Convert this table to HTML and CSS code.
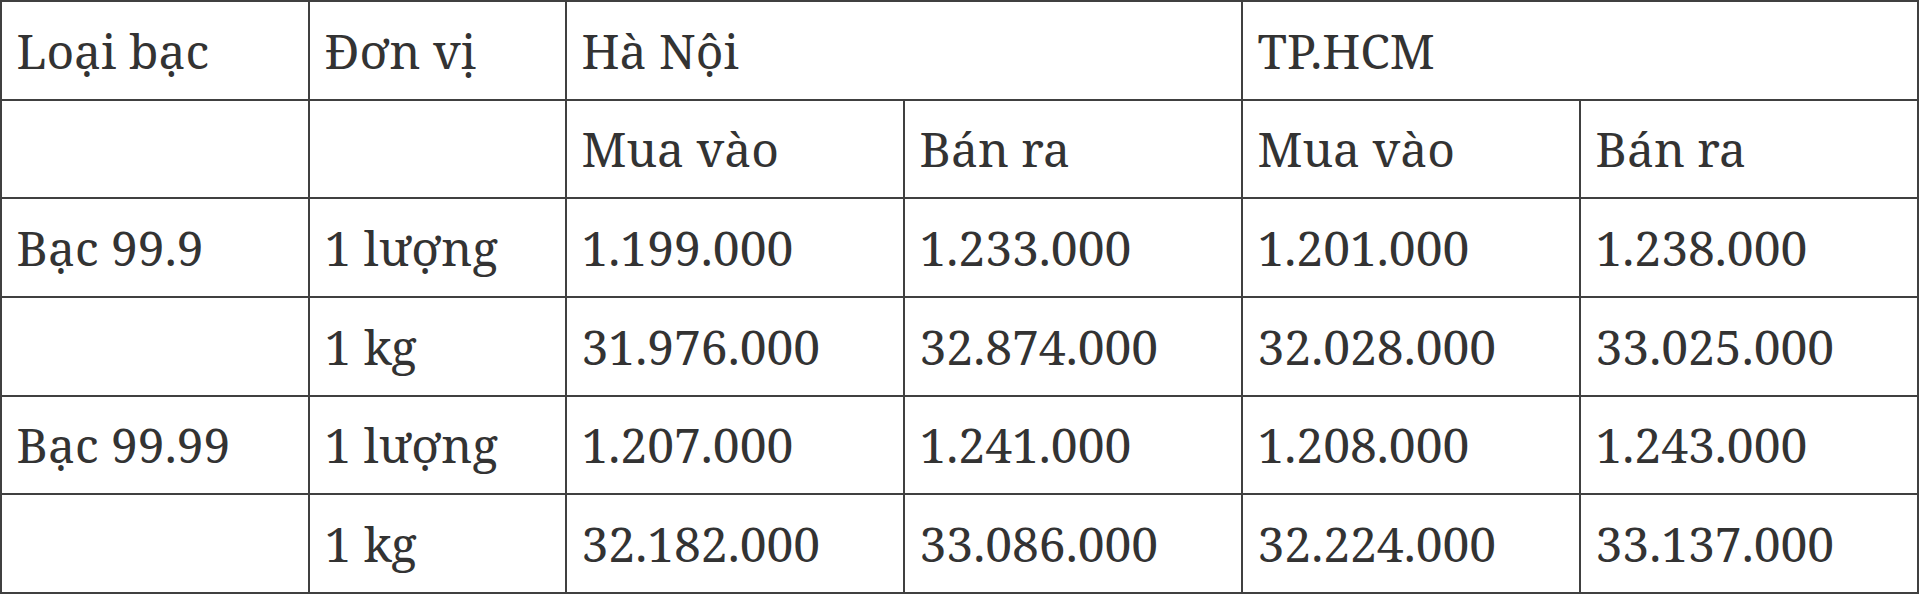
FILE: index.html
```html
<!DOCTYPE html>
<html lang="vi">
<head>
<meta charset="utf-8">
<title>Giá bạc</title>
<link rel="stylesheet" href="styles.css">
</head>
<body>
<table class="price-table">
  <colgroup>
    <col class="c-type">
    <col class="c-unit">
    <col class="c-price">
    <col class="c-price">
    <col class="c-price">
    <col class="c-price">
  </colgroup>
  <tbody>
    <tr>
      <td>Loại bạc</td>
      <td>Đơn vị</td>
      <td colspan="2">Hà Nội</td>
      <td colspan="2">TP.HCM</td>
    </tr>
    <tr>
      <td></td>
      <td></td>
      <td>Mua vào</td>
      <td>Bán ra</td>
      <td>Mua vào</td>
      <td>Bán ra</td>
    </tr>
    <tr>
      <td>Bạc 99.9</td>
      <td>1 lượng</td>
      <td>1.199.000</td>
      <td>1.233.000</td>
      <td>1.201.000</td>
      <td>1.238.000</td>
    </tr>
    <tr>
      <td></td>
      <td>1 kg</td>
      <td>31.976.000</td>
      <td>32.874.000</td>
      <td>32.028.000</td>
      <td>33.025.000</td>
    </tr>
    <tr>
      <td>Bạc 99.99</td>
      <td>1 lượng</td>
      <td>1.207.000</td>
      <td>1.241.000</td>
      <td>1.208.000</td>
      <td>1.243.000</td>
    </tr>
    <tr>
      <td></td>
      <td>1 kg</td>
      <td>32.182.000</td>
      <td>33.086.000</td>
      <td>32.224.000</td>
      <td>33.137.000</td>
    </tr>
  </tbody>
</table>
</body>
</html>
```

FILE: styles.css
```css
html, body {
  margin: 0;
  padding: 0;
  background: #ffffff;
}

.price-table {
  border-collapse: collapse;
  table-layout: fixed;
  width: 1917px;
  font-family: "Noto Serif", "Droid Serif", "DejaVu Serif", serif;
  font-size: 48px;
  color: #333333;
}

.c-type { width: 308px; }
.c-unit { width: 257px; }
.c-price { width: 338px; }

.price-table td {
  border: 2px solid #404040;
  height: 96.7px;
  padding: 0 14.5px;
  vertical-align: middle;
  text-align: left;
  white-space: nowrap;
  line-height: 1.2;
}
```
